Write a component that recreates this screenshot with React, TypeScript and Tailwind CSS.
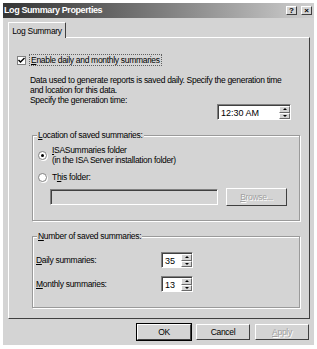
const font = { fontFamily: '"Liberation Sans", Arial, sans-serif' }

function Spin() {
  return (
    <div className="flex flex-col w-[11px] h-full">
      <div className="flex-1 flex items-center justify-center bg-[#d4d4d4] border-t border-l border-white border-r border-b border-r-[#6a6a6a] border-b-[#6a6a6a]">
        <div className="w-0 h-0 border-l-[2px] border-r-[2px] border-b-[2px] border-l-transparent border-r-transparent border-b-black" />
      </div>
      <div className="flex-1 flex items-center justify-center bg-[#d4d4d4] border-t border-l border-white border-r border-b border-r-[#6a6a6a] border-b-[#6a6a6a]">
        <div className="w-0 h-0 border-l-[2px] border-r-[2px] border-t-[2px] border-l-transparent border-r-transparent border-t-black" />
      </div>
    </div>
  )
}

function SpinBox({ value, width }: { value: string; width: string }) {
  return (
    <div className={`flex h-[16px] bg-white border-t border-l border-[#808080] border-r border-b border-r-white border-b-white ${width}`}>
      <div className="flex-1 flex items-center pl-[2px] border-t border-l border-[#404040] text-[9px] tracking-normal text-black">
        {value}
      </div>
      <div className="border-t border-[#404040] h-full">
        <Spin />
      </div>
    </div>
  )
}

function GroupBox({ label, className, children }: { label: React.ReactNode; className: string; children: React.ReactNode }) {
  return (
    <div className={`relative border border-[#9a9a9a] shadow-[inset_1px_1px_0_#ffffff,1px_1px_0_#ffffff] ${className}`}>
      <div className="absolute -top-[6px] left-[4px] bg-[#d4d4d4] px-[1px] leading-[10px]">{label}</div>
      {children}
    </div>
  )
}

function Radio({ on }: { on: boolean }) {
  return (
    <div className="w-[9px] h-[9px] shrink-0 rounded-full bg-white border border-[#808080] shadow-[1px_1px_0_#ffffff] flex items-center justify-center">
      {on && <div className="w-[3px] h-[3px] rounded-full bg-black" />}
    </div>
  )
}

function Btn({ children, def, disabled }: { children: React.ReactNode; def?: boolean; disabled?: boolean }) {
  return (
    <div
      className={`w-[54px] h-[16px] flex items-center justify-center text-[8.5px] tracking-[-0.3px] bg-[#d4d4d4] border-t border-l border-white border-r border-b border-r-[#404040] border-b-[#404040] ${
        def ? "outline outline-1 outline-black" : ""
      } ${disabled ? "text-[#a0a0a0] [text-shadow:1px_1px_0_#ffffff]" : "text-black"}`}
    >
      {children}
    </div>
  )
}

export default function App() {
  return (
    <div className="w-[317px] h-[349px] bg-white pt-[3px] pl-[3px] overflow-hidden" style={font}>
      <div className="w-[311px] h-[342px] bg-[#d4d4d4] flex flex-col">
        {/* Title bar */}
        <div className="h-[15px] flex items-center justify-between bg-gradient-to-r from-[#353535] via-[#7c7c7c] to-[#d0d0d0] pl-[1px] pr-[2px]">
          <span className="text-white font-bold text-[9px] tracking-[-0.4px]">Log Summary Properties</span>
          <div className="flex gap-[4px]">
            <div className="w-[11px] h-[9px] bg-[#d4d4d4] border-t border-l border-white border-r border-b border-r-[#404040] border-b-[#404040] flex items-center justify-center text-[8px] font-bold leading-none">?</div>
            <div className="w-[11px] h-[9px] bg-[#d4d4d4] border-t border-l border-white border-r border-b border-r-[#404040] border-b-[#404040] flex items-center justify-center text-[8px] font-bold leading-none">×</div>
          </div>
        </div>

        <div className="pl-[5px] pt-[4px] text-[8.5px] tracking-[-0.3px] leading-[10px] text-black">
          {/* Tab */}
          <div className="w-[58px] h-[16px] bg-[#d4d4d4] border-t border-l border-white border-r border-r-[#404040] rounded-t-[1px] flex items-center justify-center relative z-10 -mb-[1px]">
            Log Summary
          </div>

          {/* Panel */}
          <div className="w-[302px] h-[282px] border-t border-l border-white border-r border-b border-r-[#404040] border-b-[#404040] pl-[8px] pt-[17px]">
            <div className="flex items-center gap-[4px] h-[10px]">
              <div className="w-[9px] h-[9px] bg-white border border-[#808080] flex items-center justify-center">
                <svg width="7" height="7" viewBox="0 0 7 7">
                  <path d="M0.5 3 L2.5 5 L6.5 1" stroke="black" strokeWidth="1.4" fill="none" />
                </svg>
              </div>
              <span className="outline outline-1 outline-dotted outline-[#606060] px-[1px]">
                <u>E</u>nable daily and monthly summaries
              </span>
            </div>

            <div className="pl-[13px] mt-[10px] whitespace-nowrap">
              <p>Data used to generate reports is saved daily. Specify the generation time</p>
              <p>and location for this data.</p>

              <div className="flex">
                <span className="w-[187px]">Specify the generation time:</span>
                <div className="mt-[9px]">
                  <SpinBox value="12:30 AM" width="w-[74px]" />
                </div>
              </div>
            </div>

            <GroupBox label={<><u>L</u>ocation of saved summaries:</>} className="ml-[15px] mt-[15px] w-[268px] h-[86px] pl-[5px] pt-[9px]">
              <div className="flex items-center gap-[5px]">
                <Radio on />
                <div>
                  <div><u>I</u>SASummaries folder</div>
                  <div>(in the ISA Server installation folder)</div>
                </div>
              </div>
              <div className="flex items-center gap-[5px] mt-[7px]">
                <Radio on={false} />
                <span>T<u>h</u>is folder:</span>
              </div>
              <div className="flex items-center gap-[8px] mt-[6px] pl-[12px]">
                <div className="w-[168px] h-[16px] bg-[#d4d4d4] border-t border-l border-[#808080] border-r border-b border-r-white border-b-white">
                  <div className="w-full h-full border-t border-l border-[#404040]" />
                </div>
                <div className="w-[61px] h-[18px] flex items-center justify-center bg-[#d4d4d4] border-t border-l border-white border-r border-b border-r-[#404040] border-b-[#404040] text-[#a0a0a0] [text-shadow:1px_1px_0_#ffffff]">
                  <u>B</u>rowse...
                </div>
              </div>
            </GroupBox>

            <GroupBox label={<><u>N</u>umber of saved summaries:</>} className="ml-[15px] mt-[15px] w-[268px] h-[72px] pl-[3px] pt-[15px]">
              <div className="flex items-center">
                <span className="w-[125px]"><u>D</u>aily summaries:</span>
                <SpinBox value="35" width="w-[32px]" />
              </div>
              <div className="flex items-center mt-[8px]">
                <span className="w-[125px]"><u>M</u>onthly summaries:</span>
                <SpinBox value="13" width="w-[32px]" />
              </div>
            </GroupBox>
          </div>
        </div>

        {/* Buttons */}
        <div className="flex justify-end gap-[5px] pr-[5px] mt-[5px]">
          <Btn def>OK</Btn>
          <Btn>Cancel</Btn>
          <Btn disabled><u>A</u>pply</Btn>
        </div>
      </div>
    </div>
  )
}
